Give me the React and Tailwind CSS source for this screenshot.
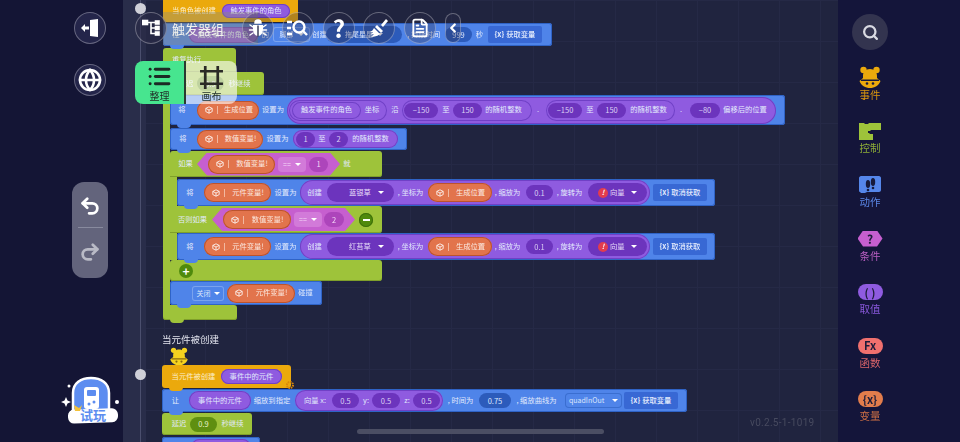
import React from 'react';
import { Globe, Undo2, Redo2, Search, FileText, ChevronLeft, List } from 'lucide-react';

const T = ({ className = '', children }) => (
  <span className={`flex shrink-0 items-center justify-center whitespace-nowrap text-[7.3px] leading-none text-[#e2eafc] ${className}`}>{children}</span>
);

const Cube = () => (
  <svg width="8" height="8" viewBox="0 0 10 10" fill="none" stroke="#fff" strokeWidth="1" className="shrink-0">
    <path d="M5 1l4 2v4L5 9 1 7V3z M1 3l4 2 4-2 M5 5v4" />
  </svg>
);

const Var = ({ className = '', children }) => (
  <div className={`flex h-[19px] shrink-0 items-center rounded-full bg-[#e2744c] pl-[8px] shadow-[inset_0_0_0_1px_#bb532e] ${className}`}>
    <Cube />
    <span className="ml-[4px] h-[8px] w-px bg-[#f2b8a0]" />
    <T className="flex-1 text-[#fbe9e0]">{children}</T>
  </div>
);

const Num = ({ className = '', children }) => (
  <div className={`flex h-[15px] shrink-0 items-center justify-center rounded-full text-[7.5px] text-[#dcd0f5] ${className}`}>{children}</div>
);

const Caret = () => <span className="block h-0 w-0 shrink-0 border-x-[3px] border-t-[3px] border-x-transparent border-t-white" />;

const Notch = ({ color }) => (
  <span className={`absolute bottom-[-3px] left-[7px] z-10 h-[4px] w-[14px] rounded-b-[4px] ${color}`} />
);

const Blue = ({ className = '', children }) => (
  <div className={`relative flex shrink-0 items-center rounded-[3px] bg-[#4f84e9] shadow-[inset_0_0_0_1px_#2f63c6] ${className}`}>
    {children}
    <Notch color="bg-[#4f84e9]" />
  </div>
);

const Green = ({ className = '', children }) => (
  <div className={`relative flex shrink-0 items-center rounded-[3px] bg-[#9ec33a] shadow-[inset_0_-1px_0_#7f9f2a] ${className}`}>{children}</div>
);

const Purple = ({ className = '', children }) => (
  <div className={`flex shrink-0 items-center rounded-full bg-[#8f5be0] shadow-[inset_0_0_0_1px_#7040c6] ${className}`}>{children}</div>
);

const Hex = ({ className = '', children }) => (
  <div className={`flex h-[23px] w-[143px] shrink-0 items-center bg-[#c65fcf] [clip-path:polygon(0_50%,7%_0,93%_0,100%_50%,93%_100%,7%_100%)] ${className}`}>{children}</div>
);

const Eq = ({ className = '' }) => (
  <div className={`flex h-[15px] w-[28px] shrink-0 items-center justify-center gap-[4px] rounded-[4px] bg-[#d27ad9] text-[7px] text-[#f5d8f8] ${className}`}>
    == <Caret />
  </div>
);

const VarButton = ({ className = '', children }) => (
  <div className={`flex h-[17px] w-[54px] shrink-0 items-center justify-center rounded-[2px] bg-[#3868d4] text-[7.3px] font-medium text-[#e2eafc] ${className}`}>
    <span className="mr-[2px] font-bold">{'{x}'}</span>{children}
  </div>
);

const PurpleDrop = ({ className = '', dot, children }) => (
  <div className={`flex h-[19px] shrink-0 items-center rounded-full bg-[#6c34bd] ${className}`}>
    {dot}
    <T className="text-[#e6dcf8]">{children}</T>
    <span className="ml-auto mr-[10px] flex"><Caret /></span>
  </div>
);

const CreateRow = ({ plant }) => (
  <Blue className="h-[27px] w-[538px]">
    <T className="ml-[9px] w-[8px]">将</T>
    <Var className="ml-[10px] w-[67px]">元件变量!</Var>
    <T className="ml-[4px] w-[21px]">设置为</T>
    <Purple className="ml-[4px] h-[25px] w-[350px]">
      <T className="ml-[8px] w-[13px]">创建</T>
      <PurpleDrop className="ml-[6px] w-[67px] pl-[22px]">{plant}</PurpleDrop>
      <T className="ml-[4px] w-[25px]">, 坐标为</T>
      <Var className="ml-[5px] w-[64px]">生成位置</Var>
      <T className="ml-[3px] w-[25px]">, 缩放为</T>
      <Num className="ml-[6px] w-[27px] bg-[#6c34bd]">0.1</Num>
      <T className="ml-[4px] w-[25px]">, 旋转为</T>
      <PurpleDrop
        className="ml-[6px] w-[59px] pl-[10px]"
        dot={<span className="mr-[2px] flex h-[10px] w-[10px] items-center justify-center rounded-full bg-[#e23c4e] text-[7px] font-bold italic text-white">!</span>}
      >
        向量
      </PurpleDrop>
    </Purple>
    <VarButton className="ml-[3px]">取消获取</VarButton>
  </Blue>
);

const ScriptOne = () => (
  <div className="absolute left-[40px] top-0 flex flex-col">
    <div className="relative flex h-[22px] w-[135px] shrink-0 items-center rounded-b-[3px] bg-[#eba90c]">
      <T className="ml-[9px] w-[44px] text-[#fbeecb]">当角色被创建</T>
      <Purple className="ml-[6px] h-[14px] w-[68px]"><T className="w-full">触发事件的角色</T></Purple>
    </div>
    <Blue className="mt-[1px] h-[23px] w-[389px]">
      <T className="ml-[9px] w-[8px]">往</T>
      <Purple className="ml-[9px] h-[16px] w-[69px]"><T className="w-full">触发事件的角色</T></Purple>
      <T className="ml-[4px] w-[7px]">的</T>
      <div className="ml-[4px] flex h-[15px] w-[37px] shrink-0 items-center justify-center gap-[4px] rounded-[3px] bg-[#4f84e9] text-[7px] text-[#dce6fb] shadow-[inset_0_0_0_1px_#7aa3ee]">脚部 <Caret /></div>
      <T className="ml-[3px] w-[13px]">创建</T>
      <div className="ml-[0px] flex h-[17px] w-[76px] shrink-0 items-center justify-center gap-[4px] rounded-full bg-[#2c5bbb] text-[7px] text-[#dce6fb]">拖尾星星 <Caret /></div>
      <T className="ml-[3px] w-[38px]">, 持续时间</T>
      <Num className="ml-[2px] w-[27px] bg-[#2c5bbb] text-[#dce6fb]">999</Num>
      <T className="ml-[4px] w-[7px]">秒</T>
      <VarButton className="ml-[5px]">获取变量</VarButton>
    </Blue>
    <div className="flex flex-col">
      <Green className="mt-[2px] h-[24px] w-[73px] rounded-b-none">
        <T className="ml-[9px] w-[29px]">重复执行</T>
      </Green>
      <div className="flex">
        <div className="w-[7px] shrink-0 bg-[#9ec33a]" />
        <div className="flex flex-col">
          <Green className="ml-[1px] h-[23px] w-[93px]">
            <T className="ml-[8px] w-[14px]">延迟</T>
            <Num className="ml-[4px] w-[27px] bg-[#5f8f10]">0.9</Num>
            <T className="ml-[4px] w-[23px]">秒继续</T>
          </Green>
          <Blue className="h-[30px] w-[615px]">
            <T className="ml-[8px] w-[8px]">将</T>
            <Var className="ml-[11px] w-[62px]">生成位置</Var>
            <T className="ml-[4px] w-[20px]">设置为</T>
            <Purple className="ml-[4px] h-[27px] w-[489px]">
              <Purple className="ml-[2px] h-[21px] w-[98px]">
                <Purple className="ml-[3px] h-[17px] w-[69px]"><T className="w-full">触发事件的角色</T></Purple>
                <T className="ml-[4px] w-[14px]">坐标</T>
              </Purple>
              <T className="ml-[4px] w-[8px]">沿</T>
              <Purple className="ml-[3px] h-[21px] w-[130px]">
                <Num className="ml-[2px] w-[34px] bg-[#6c34bd]">−150</Num>
                <T className="ml-[4px] w-[8px]">至</T>
                <Num className="ml-[3px] w-[29px] bg-[#6c34bd]">150</Num>
                <T className="ml-[3px] w-[37px]">的随机整数</T>
              </Purple>
              <T className="ml-[4px] w-[4px]">.</T>
              <Purple className="ml-[6px] h-[21px] w-[129px]">
                <Num className="ml-[2px] w-[34px] bg-[#6c34bd]">−150</Num>
                <T className="ml-[4px] w-[8px]">至</T>
                <Num className="ml-[3px] w-[29px] bg-[#6c34bd]">150</Num>
                <T className="ml-[4px] w-[37px]">的随机整数</T>
              </Purple>
              <T className="ml-[4px] w-[4px]">.</T>
              <Num className="ml-[7px] w-[30px] bg-[#6c34bd]">−80</Num>
              <T className="ml-[3px] w-[44px]">偏移后的位置</T>
            </Purple>
          </Blue>
          <Blue className="mt-[3px] h-[22px] w-[237px]">
            <T className="ml-[9px] w-[8px]">将</T>
            <Var className="ml-[10px] w-[66px]">数值变量!</Var>
            <T className="ml-[4px] w-[21px]">设置为</T>
            <Purple className="ml-[5px] h-[18px] w-[105px]">
              <Num className="ml-[3px] w-[19px] bg-[#6c34bd]">1</Num>
              <T className="ml-[3px] w-[8px]">至</T>
              <Num className="ml-[3px] w-[19px] bg-[#6c34bd]">2</Num>
              <T className="ml-[4px] w-[37px]">的随机整数</T>
            </Purple>
          </Blue>
          <Green className="mt-px h-[26px] w-[212px] rounded-bl-none">
            <T className="ml-[8px] w-[15px]">如果</T>
            <Hex className="ml-[4px]">
              <Var className="ml-[11px] w-[67px]">数值变量!</Var>
              <Eq className="ml-[3px]" />
              <Num className="ml-[3px] w-[19px] bg-[#ad45bb] text-[#f5d8f8]">1</Num>
            </Hex>
            <T className="ml-[3px] w-[8px]">就</T>
          </Green>
          <div className="flex">
            <div className="w-[7px] shrink-0 bg-[#9ec33a]" />
            <div className="flex flex-col">
              <div className="mt-[2px]"><CreateRow plant="蓝银草" /></div>
              <Green className="-ml-[7px] h-[27px] w-[212px] rounded-bl-none">
                <T className="ml-[8px] w-[29px]">否则如果</T>
                <Hex className="ml-[5px]">
                  <Var className="ml-[11px] w-[68px]">数值变量!</Var>
                  <Eq className="ml-[3px]" />
                  <Num className="ml-[2px] w-[20px] bg-[#ad45bb] text-[#f5d8f8]">2</Num>
                </Hex>
                <span className="ml-[4px] flex h-[14px] w-[14px] shrink-0 items-center justify-center rounded-full bg-[#4f8a0c] shadow-[inset_0_0_0_1px_#3e700a]">
                  <span className="h-[2px] w-[7px] bg-white" />
                </span>
              </Green>
              <CreateRow plant="红苔草" />
            </div>
          </div>
          <Green className="h-[21px] w-[212px]">
            <span className="ml-[9px] flex h-[14px] w-[14px] shrink-0 items-center justify-center rounded-full bg-[#4f8a0c] text-[12px] font-bold leading-none text-white">+</span>
          </Green>
          <Blue className="h-[24px] w-[152px]">
            <div className="ml-[22px] flex h-[15px] w-[32px] shrink-0 items-center justify-center gap-[3px] rounded-[3px] text-[7px] text-[#dce6fb] shadow-[inset_0_0_0_1px_#7aa3ee]">关闭 <Caret /></div>
            <Var className="ml-[3px] w-[68px]">元件变量!</Var>
            <T className="ml-[3px] w-[15px]">碰撞</T>
          </Blue>
        </div>
      </div>
      <Green className="h-[15px] w-[74px] rounded-tl-none">
        <span className="absolute bottom-[-3px] left-[7px] h-[4px] w-[14px] rounded-b-[4px] bg-[#9ec33a]" />
      </Green>
    </div>
  </div>
);

const BearHead = ({ size = 20, color = '#f5d21f', line = '#8a6a10', className = '' }) => (
  <svg width={size} height={size} viewBox="0 0 24 24" className={className}>
    <circle cx="5.500" cy="4" r="3.200" fill={color} />
    <circle cx="18.500" cy="4" r="3.200" fill={color} />
    <path d="M12 3c4.500 0 7 3 7 7v2l3.500 3c-1.500 4.500-6 7-10.500 7S3 19.500 1.500 15L5 12v-2c0-4 2.500-7 7-7z" fill={color} />
    <path d="M3 13.500h18v1.500H3z" fill={line} />
    <circle cx="9" cy="17.500" r="1.300" fill={line} />
    <circle cx="15" cy="17.500" r="1.300" fill={line} />
  </svg>
);

const ScriptTwo = () => (
  <div className="absolute left-[39px] top-[332px] flex flex-col">
    <span className="text-[9.5px] leading-[14px] text-[#e2e4ee]">当元件被创建</span>
    <BearHead className="ml-[7px] mt-px" />
    <div className="relative -mt-[2px] flex h-[23px] w-[129px] shrink-0 items-center rounded-[3px] bg-[#eba90c]">
      <T className="ml-[10px] w-[43px] text-[#fbeecb]">当元件被创建</T>
      <Purple className="ml-[6px] h-[15px] w-[61px]"><T className="w-full">事件中的元件</T></Purple>
      <svg width="10" height="10" viewBox="0 0 10 10" className="absolute bottom-[-2px] right-[-4px]">
        <circle cx="5" cy="5" r="3" fill="none" stroke="#d9860a" strokeWidth="2" strokeDasharray="1.5 0.8" />
      </svg>
      <Notch color="bg-[#eba90c]" />
    </div>
    <Blue className="mt-px h-[23px] w-[525px]">
      <T className="ml-[10px] w-[7px]">让</T>
      <Purple className="ml-[10px] h-[19px] w-[62px]"><T className="w-full">事件中的元件</T></Purple>
      <T className="ml-[3px] w-[36px]">缩放到指定</T>
      <Purple className="ml-[5px] h-[21px] w-[148px]">
        <T className="ml-[9px] w-[22px]">向量 x:</T>
        <Num className="ml-[6px] w-[27px] bg-[#6c34bd]">0.5</Num>
        <T className="ml-[3px] w-[8px]">y:</T>
        <Num className="ml-[2px] w-[28px] bg-[#6c34bd]">0.5</Num>
        <T className="ml-[3px] w-[8px]">z:</T>
        <Num className="ml-[2px] w-[27px] bg-[#6c34bd]">0.5</Num>
      </Purple>
      <T className="ml-[3px] w-[29px]">, 时间为</T>
      <Num className="ml-[4px] w-[32px] bg-[#2c5bbb] text-[#dce6fb]">0.75</Num>
      <T className="ml-[4px] w-[43px]">, 缩放曲线为</T>
      <div className="ml-[7px] flex h-[15px] w-[57px] shrink-0 items-center justify-between rounded-[4px] px-[4px] text-[7px] text-[#dce6fb] shadow-[inset_0_0_0_1px_#3a6ed0]">quadInOut <Caret /></div>
      <VarButton className="ml-[2px]">获取变量</VarButton>
    </Blue>
    <Green className="mt-px h-[22px] w-[90px]">
      <T className="ml-[10px] w-[14px]">延迟</T>
      <Num className="ml-[4px] w-[27px] bg-[#5f8f10] text-[#e6f2cc]">0.9</Num>
      <T className="ml-[4px] w-[23px]">秒继续</T>
    </Green>
    <Blue className="mt-[2px] h-[20px] w-[98px]">
      <Purple className="ml-[29px] h-[17px] w-[60px]"><T className="w-full">事件中的元件</T></Purple>
    </Blue>
  </div>
);

const Circle = ({ className = '', children }) => (
  <div className={`flex h-[32px] w-[32px] shrink-0 items-center justify-center rounded-full border border-white/30 text-white ${className}`}>{children}</div>
);

const Toolbar = () => (
  <div className="absolute left-[135px] top-[12px] z-20 flex items-center">
    <span className="absolute left-[28px] top-[0px] h-[33px] w-[95px] bg-[#8d8c78]/40" />
    <Circle className="relative bg-[#2b2c48]/60">
      <svg width="18" height="18" viewBox="0 0 18 18" fill="none" stroke="#fff" strokeWidth="1.6">
        <rect x="0.500" y="1.500" width="5" height="4" fill="#fff" />
        <path d="M5 3.500h9M9 3.500v11h5M9 9h5" />
        <rect x="13.500" y="2" width="3.500" height="3" fill="#fff" />
        <rect x="13.500" y="7.500" width="3.500" height="3" fill="#fff" />
        <rect x="13.500" y="13" width="3.500" height="3" fill="#fff" />
      </svg>
    </Circle>
    <span className="relative ml-[5px] w-[53px] text-[13px] leading-none text-[#f3f3ee]">触发器组</span>
    <Circle className="relative ml-[17px] bg-[#2b2c48]/30">
      <svg width="20" height="20" viewBox="0 0 20 20" fill="#fff" stroke="#fff" strokeWidth="1.500" strokeLinecap="round">
        <path d="M7 5a3 3 0 0 1 6 0z" />
        <path d="M5 7h10v4c0 4-2 7-5 7s-5-3-5-7z" stroke="none" />
        <path d="M10 8v10" stroke="#3a3c58" />
        <path d="M5 9L2 7M5 12H1.500M5 15l-3 2M15 9l3-2M15 12h3.500M15 15l3 2" fill="none" />
      </svg>
    </Circle>
    <Circle className="ml-[8px] bg-[#2b2c48]/30">
      <svg width="22" height="18" viewBox="0 0 22 18" fill="none" stroke="#fff" strokeWidth="2.4">
        <path d="M0 3h5M0 9h4M0 15h5" />
        <circle cx="12" cy="8" r="5.500" />
        <path d="M16 12l4 4" />
      </svg>
    </Circle>
    <Circle className="ml-[9px] bg-[#2b2c48]/30"><span className="text-[24px] font-bold leading-none">?</span></Circle>
    <Circle className="ml-[8px] bg-[#2b2c48]/30">
      <svg width="22" height="22" viewBox="0 0 22 22" fill="#fff">
        <path d="M13 8l5-6 2 2-5 6z" />
        <path d="M9 8l6 6-2 2L7 10z" />
        <path d="M6 11l6 6c-2 2-5 3-9 3l3-3-4 1 3-3-3 0c2-1 3-2 4-4z" />
      </svg>
    </Circle>
    <Circle className="ml-[9px] bg-[#2b2c48]/30"><FileText size={20} strokeWidth={2.2} /></Circle>
    <div className="ml-[9px] flex h-[30px] w-[16px] shrink-0 items-center justify-center rounded-full border border-white/30 bg-[#2b2c48]/30 text-white">
      <ChevronLeft size={14} strokeWidth={4} />
    </div>
  </div>
);

const ModeTabs = () => (
  <div className="absolute left-[135px] top-[61px] z-20 flex h-[43px] text-[10px] leading-none text-[#22302a]">
    <div className="flex w-[51px] flex-col items-center justify-center rounded-l-[8px] border-r-2 border-[#2a3a30] bg-[#47e58f]">
      <List size={25} strokeWidth={2.8} color="#1c2a24" />
      <span className="mt-[2px]">整理</span>
    </div>
    <div className="flex w-[51px] flex-col items-center justify-center rounded-r-[8px] bg-white/60">
      <svg width="25" height="25" viewBox="0 0 24 24" fill="none" stroke="#2a2a26" strokeWidth="2.6">
        <path d="M6 1v22M18 1v22M1 6h22M1 18h22" />
      </svg>
      <span className="mt-[1px]">画布</span>
    </div>
  </div>
);

const Mascot = () => (
  <svg width="62" height="52" viewBox="0 0 62 52" className="mt-[97px] ml-[60px]">
    <path d="M13 42V18C13 8 21 3 31 3s18 5 18 15v24z" fill="#5d8df0" stroke="#fff" strokeWidth="2.5" />
    <rect x="24" y="12" width="15" height="22" rx="3" fill="#fff" />
    <rect x="27" y="15" width="9" height="6" rx="1" fill="#5d8df0" />
    <circle cx="34" cy="27" r="1.500" fill="#5d8df0" />
    <circle cx="29" cy="29" r="1.500" fill="#5d8df0" />
    <rect x="8" y="34" width="50" height="14" rx="6" fill="#fff" transform="rotate(-2 31 41)" />
    <path d="M14 30l5 3 3-3-2 6h-5z" fill="#f3c23a" />
    <text x="33" y="45" textAnchor="middle" fontSize="13" fontWeight="700" fill="#5d8df0">试玩</text>
    <path d="M4 22l1.500 3.500L9 27l-3.500 1.500L4 32l-1.500-3.500L-1 27l3.500-1.500z" fill="#fff" transform="translate(2 0)" />
    <circle cx="9" cy="11" r="1.500" fill="#fff" />
    <circle cx="57" cy="27" r="2" fill="#fff" />
  </svg>
);

const LeftBar = () => (
  <div className="flex w-[123px] shrink-0 flex-col items-start bg-[#141535] pt-[12px]">
    <Circle className="ml-[74px] bg-[#24254a]">
      <svg width="20" height="18" viewBox="0 0 20 18" fill="#fff">
        <path d="M10 1l8-1v18l-8-1z" />
        <path d="M1 9l4-4v2.500h4v3H5V13z" />
      </svg>
    </Circle>
    <Circle className="ml-[74px] mt-[20px] bg-[#24254a]"><Globe size={24} strokeWidth={2.6} /></Circle>
    <div className="ml-[72px] mt-[86px] flex h-[96px] w-[36px] flex-col items-center rounded-[12px] bg-[#63647c]">
      <Undo2 size={22} strokeWidth={3} color="#fff" className="mt-[13px]" />
      <span className="mt-[10px] h-px w-[25px] bg-[#888a9e]" />
      <Redo2 size={22} strokeWidth={3} color="#b9bac6" className="mt-[13px]" />
    </div>
    <Mascot />
  </div>
);

const Canvas = () => (
  <div className="relative flex-1 overflow-hidden bg-[#20243f] bg-[linear-gradient(#252946_1px,transparent_1px),linear-gradient(90deg,#252946_1px,transparent_1px)] bg-[size:41px_41px]">
    <div className="absolute inset-y-0 left-0 w-[23px] bg-[#292d4a]" />
    <div className="absolute inset-y-0 left-[17px] w-px bg-[#4b4f6e]" />
    <span className="absolute left-[12px] top-[3px] h-[11px] w-[11px] rounded-full bg-[#cfd0d8]" />
    <span className="absolute left-[12px] top-[369px] h-[11px] w-[11px] rounded-full bg-[#cfd0d8]" />
    <ScriptOne />
    <ScriptTwo />
    <span className="absolute left-[234px] top-[429px] h-[5px] w-[247px] rounded-full bg-[#4b4e63]" />
    <span className="absolute left-[627px] top-[415px] font-['Roboto',sans-serif] text-[10px] tracking-[0.3px] text-[#474a5f]">v0.2.5-1-1019</span>
  </div>
);

const PaletteItem = ({ label, color, icon }) => (
  <div className="flex h-[53.6px] w-[64px] shrink-0 flex-col items-center justify-center">
    <div className="flex h-[20px] items-center justify-center">{icon}</div>
    <span className={`text-[10.5px] leading-[13px] ${color}`}>{label}</span>
  </div>
);

const Badge = ({ className = '', children }) => (
  <span className={`flex h-[16px] w-[25px] items-center justify-center rounded-full text-[11px] font-bold leading-none text-[#1c1c3a] ${className}`}>{children}</span>
);

const RightBar = () => (
  <div className="flex w-[122px] shrink-0 flex-col items-start bg-[#14153a]">
    <div className="ml-[14px] mt-[14px] flex h-[36px] w-[36px] items-center justify-center rounded-full bg-[#33344f]">
      <Search size={17} strokeWidth={3.2} color="#d9dae2" />
    </div>
    <div className="mt-[7.5px] flex flex-col">
      <PaletteItem label="事件" color="text-[#d9960f]" icon={<BearHead size={24} color="#eba90c" line="#171a3c" />} />
      <PaletteItem
        label="控制"
        color="text-[#8cab37]"
        icon={
          <svg width="24" height="20" viewBox="0 0 24 20" fill="#9ec33a">
            <path d="M1 2h5l1 1h3l1-1h12v7H13l-1 1h-2v2h1l1 1h3v6H1z" />
          </svg>
        }
      />
      <PaletteItem
        label="动作"
        color="text-[#5a86e6]"
        icon={
          <svg width="24" height="18" viewBox="0 0 24 18">
            <path d="M1 2c0-1 1-2 2-2h18c1 0 2 1 2 2v12c0 1-1 2-2 2H9l-2 1H3l-1-1c-1 0-1-1-1-2z" fill="#5586ea" />
            <ellipse cx="10" cy="8" rx="2.200" ry="4" fill="#171a3c" />
            <ellipse cx="15" cy="6" rx="2.200" ry="4" fill="#171a3c" />
            <circle cx="10" cy="14" r="1.300" fill="#171a3c" />
            <circle cx="15" cy="12" r="1.300" fill="#171a3c" />
          </svg>
        }
      />
      <PaletteItem
        label="条件"
        color="text-[#b95fc2]"
        icon={<span className="flex h-[16px] w-[25px] items-center justify-center bg-[#c65fcf] text-[12px] font-bold leading-none text-[#1c1c3a] [clip-path:polygon(0_50%,22%_0,78%_0,100%_50%,78%_100%,22%_100%)]">?</span>}
      />
      <PaletteItem label="取值" color="text-[#8757d8]" icon={<Badge className="bg-[#8f5be0]">( )</Badge>} />
      <PaletteItem label="函数" color="text-[#d8646a]" icon={<Badge className="bg-[#f0706e]">Fx</Badge>} />
      <PaletteItem label="变量" color="text-[#cd6f45]" icon={<Badge className="bg-[#e27d4c]">{'{x}'}</Badge>} />
    </div>
  </div>
);

export default function App() {
  return (
    <div className="relative flex h-[442px] w-[960px] overflow-hidden font-['Noto_Sans_CJK_SC','Noto_Sans',sans-serif] blur-[0.3px]">
      <LeftBar />
      <Canvas />
      <RightBar />
      <Toolbar />
      <ModeTabs />
    </div>
  );
}
